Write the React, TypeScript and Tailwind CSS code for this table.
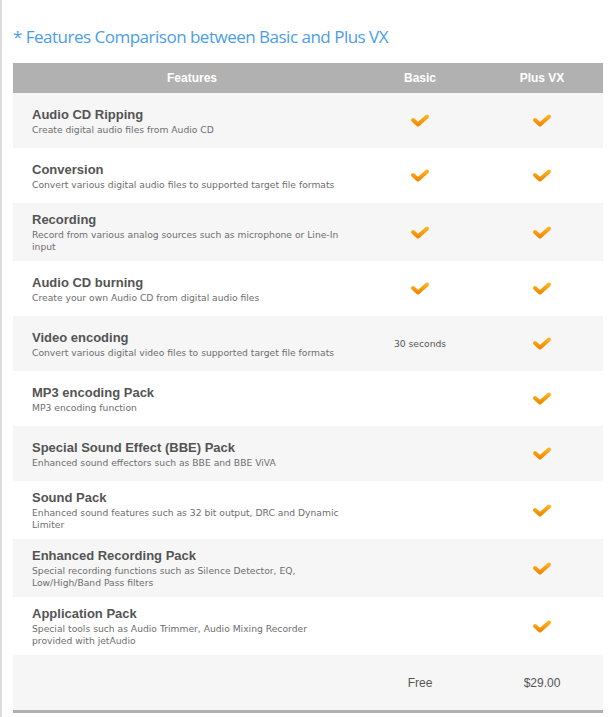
import type { ReactNode } from 'react';

type Feature = {
  title: string;
  desc: string;
  basic: ReactNode;
  tall?: boolean;
};

function Check() {
  return (
    <svg width="20" height="15" viewBox="0 0 20 15" aria-hidden="true">
      <defs>
        <linearGradient id="chk" x1="0" y1="0" x2="0" y2="1">
          <stop offset="0" stopColor="#ffb020" />
          <stop offset="1" stopColor="#f08a00" />
        </linearGradient>
      </defs>
      <polyline
        points="3,7 8,11.5 17,3.5"
        fill="none"
        stroke="url(#chk)"
        strokeWidth="4"
        strokeLinecap="round"
        strokeLinejoin="round"
      />
    </svg>
  );
}

const descFont = { fontFamily: '"DejaVu Sans", Verdana, sans-serif' };

const features: Feature[] = [
  { title: 'Audio CD Ripping', desc: 'Create digital audio files from Audio CD', basic: <Check /> },
  { title: 'Conversion', desc: 'Convert various digital audio files to supported target file formats', basic: <Check /> },
  { title: 'Recording', desc: 'Record from various analog sources such as microphone or Line-In input', basic: <Check />, tall: true },
  { title: 'Audio CD burning', desc: 'Create your own Audio CD from digital audio files', basic: <Check /> },
  {
    title: 'Video encoding',
    desc: 'Convert various digital video files to supported target file formats',
    basic: (
      <span className="text-[9.2px] text-[#555]" style={descFont}>
        30 seconds
      </span>
    ),
  },
  { title: 'MP3 encoding Pack', desc: 'MP3 encoding function', basic: null },
  { title: 'Special Sound Effect (BBE) Pack', desc: 'Enhanced sound effectors such as BBE and BBE ViVA', basic: null },
  { title: 'Sound Pack', desc: 'Enhanced sound features such as 32 bit output, DRC and Dynamic Limiter', basic: null, tall: true },
  { title: 'Enhanced Recording Pack', desc: 'Special recording functions such as Silence Detector, EQ, Low/High/Band Pass filters', basic: null, tall: true },
  { title: 'Application Pack', desc: 'Special tools such as Audio Trimmer, Audio Mixing Recorder provided with jetAudio', basic: null, tall: true },
];

export default function App() {
  return (
    <div
      className="min-h-[717px] w-[608px] border-l-2 border-[#dcdcdc] bg-white pl-[11px] pt-[27px]"
      style={{ fontFamily: '"Liberation Sans", Arial, sans-serif' }}
    >
      <h2
        className="text-[17px] leading-[20px] tracking-[-0.5px] text-[#4b9de9]"
        style={{ fontFamily: '"Open Sans", "Noto Sans", sans-serif' }}
      >
        * Features Comparison between Basic and Plus VX
      </h2>

      <div className="mt-[16px] w-[590px] border-b-[3px] border-[#b0b0b0]">
        <div className="flex h-[30px] items-center bg-[#b1b1b1] text-[12px] font-bold text-white">
          <div className="w-[358px] text-center">Features</div>
          <div className="w-[98px] text-center">Basic</div>
          <div className="flex-1 pl-[12px] text-center">Plus VX</div>
        </div>

        {features.map((f, i) => (
          <div
            key={f.title}
            className={`flex items-center py-[8px] ${f.tall ? 'min-h-[58px]' : 'min-h-[55px]'} ${i % 2 === 0 ? 'bg-[#f6f6f6]' : 'bg-white'}`}
          >
            <div className="w-[358px] pl-[19px]">
              <div className="text-[13px] font-bold leading-[18px] text-[#545454]">{f.title}</div>
              <div className="max-w-[316px] text-[9.2px] leading-[12px] text-[#6e6e6e]" style={descFont}>
                {f.desc}
              </div>
            </div>
            <div className="flex w-[98px] justify-center">{f.basic}</div>
            <div className="flex flex-1 justify-center pl-[12px]">
              <Check />
            </div>
          </div>
        ))}

        <div className="flex h-[55px] items-center bg-[#f6f6f6] text-[12px] text-[#555]">
          <div className="w-[358px]" />
          <div className="w-[98px] text-center">Free</div>
          <div className="flex-1 pl-[12px] text-center">$29.00</div>
        </div>
      </div>
    </div>
  );
}
